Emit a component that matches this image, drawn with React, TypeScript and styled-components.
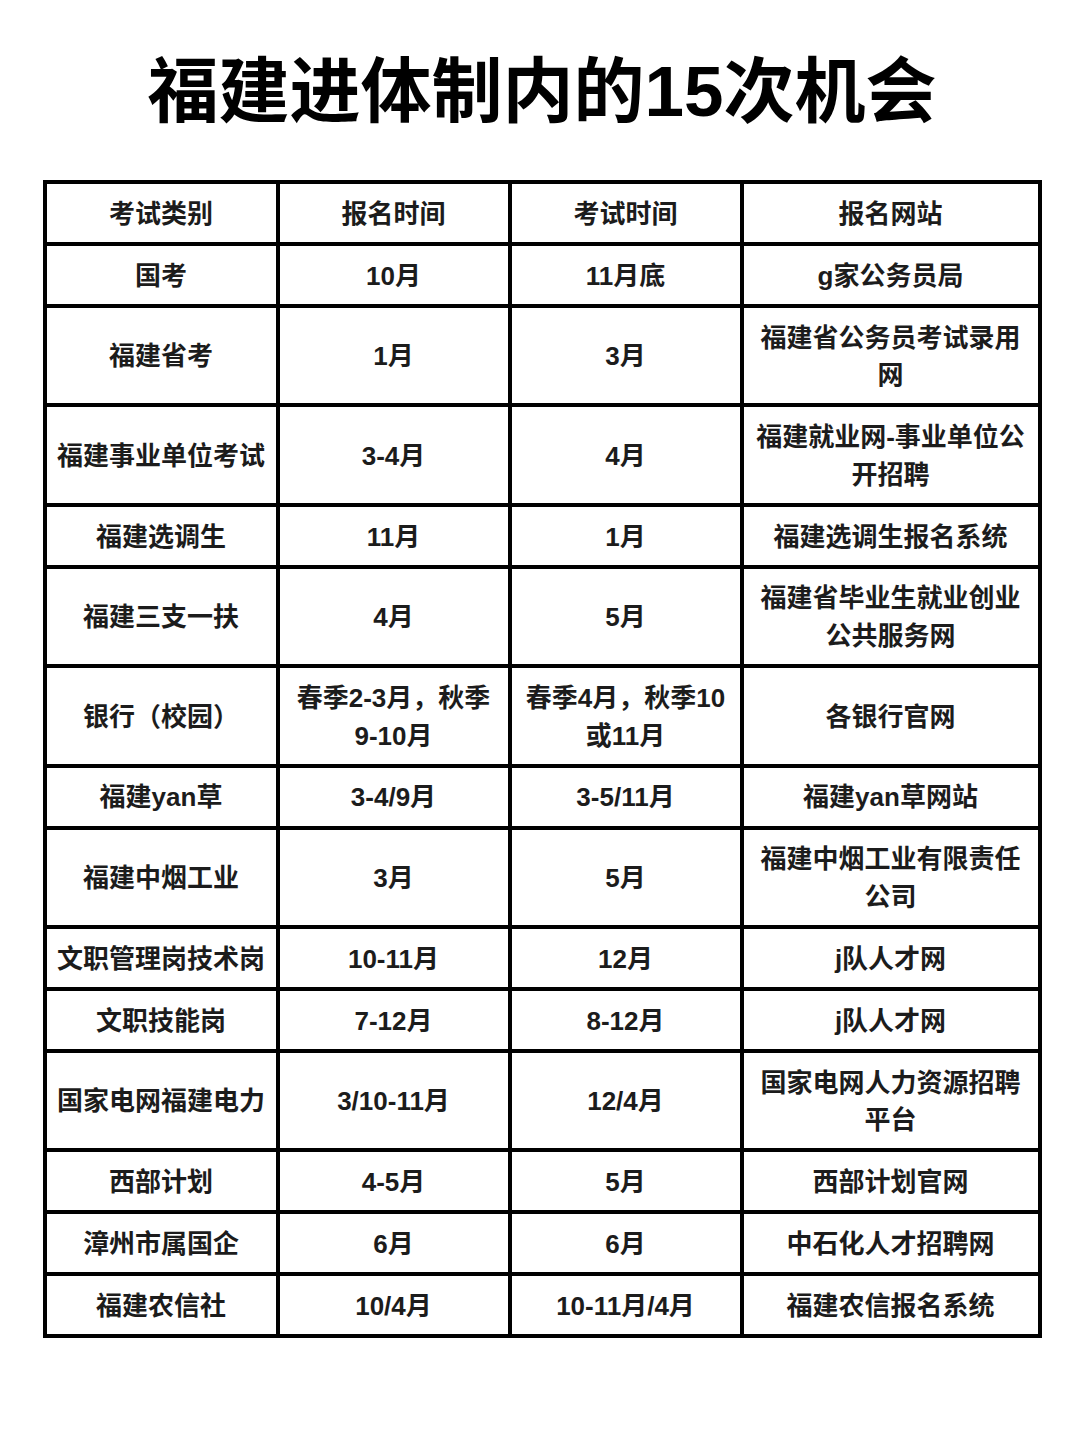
import styled, { createGlobalStyle } from "styled-components";

type Cell = string | string[];

interface Row {
  type: Cell;
  signup: Cell;
  exam: Cell;
  site: Cell;
}

const HEAD = ["考试类别", "报名时间", "考试时间", "报名网站"];

const ROWS: Row[] = [
  { type: "国考", signup: "10月", exam: "11月底", site: "g家公务员局" },
  { type: "福建省考", signup: "1月", exam: "3月", site: ["福建省公务员考试录用", "网"] },
  { type: "福建事业单位考试", signup: "3-4月", exam: "4月", site: ["福建就业网-事业单位公", "开招聘"] },
  { type: "福建选调生", signup: "11月", exam: "1月", site: "福建选调生报名系统" },
  { type: "福建三支一扶", signup: "4月", exam: "5月", site: ["福建省毕业生就业创业", "公共服务网"] },
  { type: "银行（校园）", signup: ["春季2-3月，秋季", "9-10月"], exam: ["春季4月，秋季10", "或11月"], site: "各银行官网" },
  { type: "福建yan草", signup: "3-4/9月", exam: "3-5/11月", site: "福建yan草网站" },
  { type: "福建中烟工业", signup: "3月", exam: "5月", site: ["福建中烟工业有限责任", "公司"] },
  { type: "文职管理岗技术岗", signup: "10-11月", exam: "12月", site: "j队人才网" },
  { type: "文职技能岗", signup: "7-12月", exam: "8-12月", site: "j队人才网" },
  { type: "国家电网福建电力", signup: "3/10-11月", exam: "12/4月", site: ["国家电网人力资源招聘", "平台"] },
  { type: "西部计划", signup: "4-5月", exam: "5月", site: "西部计划官网" },
  { type: "漳州市属国企", signup: "6月", exam: "6月", site: "中石化人才招聘网" },
  { type: "福建农信社", signup: "10/4月", exam: "10-11月/4月", site: "福建农信报名系统" },
];

const COLS = [233, 232, 232, 298];

const GlobalStyle = createGlobalStyle`
  html, body {
    margin: 0;
    padding: 0;
    background: #ffffff;
  }
  body {
    font-family: "Liberation Sans", "Noto Sans CJK SC", sans-serif;
    color: #1a1a1a;
  }
`;

const Page = styled.div`
  width: 1080px;
  height: 1440px;
  display: flex;
  flex-direction: column;
  align-items: center;
  padding-top: 46px;
  box-sizing: border-box;
`;

const Title = styled.h1`
  margin: 0 0 42px 4px;
  font-size: 71px;
  line-height: 92px;
  font-weight: 700;
  color: #000;
  letter-spacing: 0;
`;

const Table = styled.table`
  border-collapse: collapse;
  table-layout: fixed;
  width: 999px;
  margin-left: 4px;
`;

const Td = styled.td`
  border: 4px solid #000;
  padding: 11.8px 8px 8.5px;
  text-align: center;
  vertical-align: middle;
  font-size: 26px;
  line-height: 37.6px;
  font-weight: 600;
  color: #1c1c1c;
  white-space: nowrap;
`;

function renderCell(value: Cell) {
  if (typeof value === "string") return value;
  return value.map((line, i) => (
    <span key={i}>
      {i > 0 && <br />}
      {line}
    </span>
  ));
}

export default function App() {
  return (
    <>
      <GlobalStyle />
      <Page>
        <Title>福建进体制内的15次机会</Title>
        <Table>
          <colgroup>
            {COLS.map((w, i) => (
              <col key={i} style={{ width: w }} />
            ))}
          </colgroup>
          <tbody>
            <tr>
              {HEAD.map((h) => (
                <Td key={h}>{h}</Td>
              ))}
            </tr>
            {ROWS.map((r, i) => (
              <tr key={i}>
                <Td>{renderCell(r.type)}</Td>
                <Td>{renderCell(r.signup)}</Td>
                <Td>{renderCell(r.exam)}</Td>
                <Td>{renderCell(r.site)}</Td>
              </tr>
            ))}
          </tbody>
        </Table>
      </Page>
    </>
  );
}
